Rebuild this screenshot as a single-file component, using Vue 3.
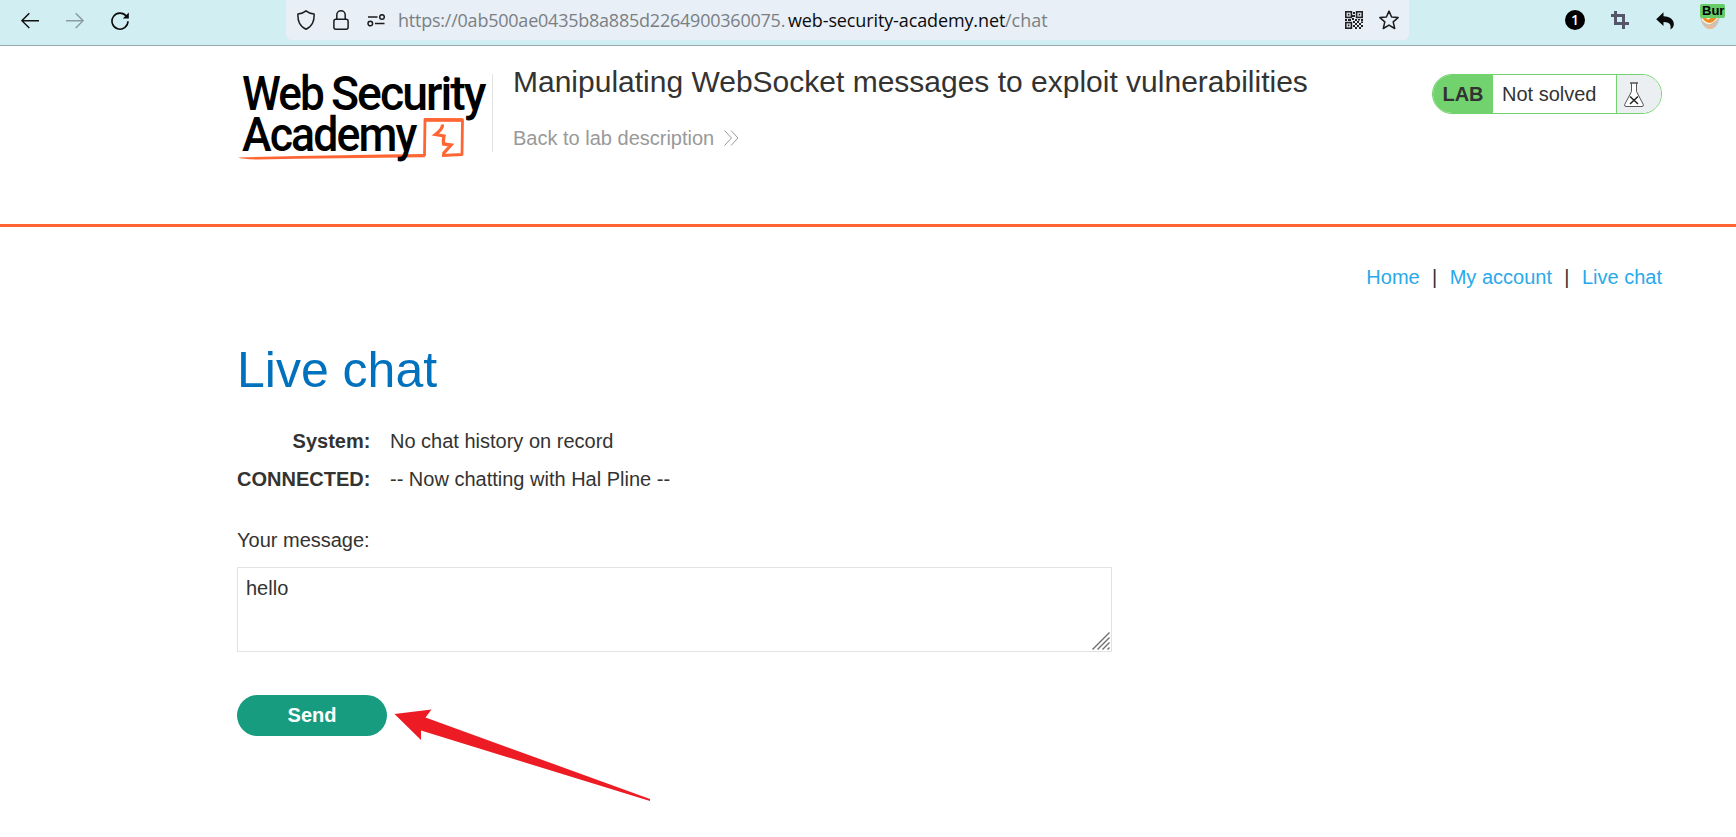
<script setup>
import { ref } from 'vue'

const message = ref('hello')
const links = ['Home', 'My account', 'Live chat']
const rows = [
  { who: 'System:', text: 'No chat history on record' },
  { who: 'CONNECTED:', text: '-- Now chatting with Hal Pline --' },
]
</script>

<template>
  <div class="page">
    <div class="toolbar">
      <div class="nav">
        <svg width="18" height="18" viewBox="0 0 18 18" fill="none" stroke="#111" stroke-width="1.5"><path d="M18 8.7H1M8.3 1.2L.9 8.7l7.4 7.3" /></svg>
        <svg width="18" height="18" viewBox="0 0 18 18" fill="none" stroke="#8b9da1" stroke-width="1.5"><path d="M0 8.7h17M9.7 1.2l7.4 7.5L9.7 16" /></svg>
        <svg width="18" height="18" viewBox="0 0 18 18" fill="none" stroke="#0b0b0b" stroke-width="1.6"><path d="M15.2 4.1A8 8 0 1 0 17 9.3" /><path d="M17.8.4v6h-6z" fill="#0b0b0b" stroke="none" /></svg>
      </div>
      <div class="urlbar">
        <svg class="shield" width="18" height="20" viewBox="0 0 18 20" fill="none" stroke="#1c1c1e" stroke-width="1.5" stroke-linejoin="round"><path d="M9 .9Q12 3.5 17.1 4q.2 5.5-1.5 9Q13.400 17.500 9 19.200 4.600 17.500 2.400 13 .7 9.500.9 4 6 3.500 9 .9z" /></svg>
        <svg class="lock" width="16" height="20" viewBox="0 0 16 20" fill="none" stroke="#1c1c1e" stroke-width="1.5"><rect x=".9" y="9.300" width="14.200" height="9.900" rx="2" /><path d="M3.800 9.300V5a4.200 4.200 0 0 1 8.400 0v4.300" /></svg>
        <svg class="sliders" width="18" height="13" viewBox="0 0 18 13" fill="none" stroke="#1c1c1e" stroke-width="1.500"><circle cx="15" cy="3" r="2.300" /><path d="M1 3h9.500M8 9.500h9.500" /><circle cx="3.300" cy="9.500" r="2.300" /></svg>
        <div class="url"><span class="pre">https://0ab500ae0435b8a885d2264900360075.</span><span class="host">web-security-academy.net</span><span class="path">/chat</span></div>
        <svg class="qr" width="18" height="18" viewBox="0 0 18 18">
          <g fill="none" stroke="#222" stroke-width="1.600"><rect x=".8" y=".8" width="5.600" height="5.600" /><rect x="11.600" y=".8" width="5.600" height="5.600" /><rect x=".8" y="11.600" width="5.600" height="5.600" /></g>
          <path fill="#222" d="M2.800 2.800h1.600v1.600H2.800zM13.600 2.800h1.600v1.600h-1.600zM2.800 13.600h1.600v1.600H2.800zM8 1h2v2H8zM7 4h3v2H7zM0 8h2v2H0zM3 8h3v2H3zM7 7h2v2H7zM10 8h2v2h-2zM13 8h2v1.500h-2zM16 8h2v2h-2zM8 10h2v2H8zM10 12h2v2h-2zM12 10h2v2h-2zM14 12h2v2h-2zM16 10.500h2v1.500h-2zM8 14h2v2H8zM12 14h2v2h-2zM10 16h2v2h-2zM14 16h2v2h-2zM16 14h2v2h-2z" />
        </svg>
        <svg class="star" width="20" height="20" viewBox="0 0 20 20" fill="none" stroke="#1c1c1e" stroke-width="1.500" stroke-linejoin="round"><path d="M10 1.100l2.600 5.900 6.500.6-4.900 4.300 1.500 6.600-5.700-3.400-5.700 3.400 1.500-6.600L.9 7.600l6.500-.6z" /></svg>
      </div>
      <div class="ext">
        <span class="one">1</span>
        <svg class="crop" width="18" height="18" viewBox="0 0 18 18" fill="none" stroke="#56566a" stroke-width="3"><path d="M4.500 0v12.500H18M0 4.500h12.500V18" /></svg>
        <svg class="undo" width="18" height="18" viewBox="0 0 18 18"><path fill="#0a0a0a" d="M7.500.3v4C14.500 4.300 18 8 17.800 12.500c-.1 2-1.300 4-3.500 5 1.200-4.500-.3-7.500-6.800-7.500v4L.2 7.200z" /></svg>
        <div class="bur">
          <svg width="20" height="14" viewBox="0 0 20 14"><path d="M0 0h20Q19 11.500 12 14H8Q1 11.500 0 0z" fill="#c9c4bb" /><path d="M1.500 0h16.500q-1 7-7 9.500Q4 8 1.500 0z" fill="#f08a24" /><path d="M2 4q4 5 8 4.500T18 2M5 1l3 3 5-3" fill="none" stroke="#fff3dd" stroke-width="1.300" /><path d="M4 9.500q6 4 12 0l-4 4.300H8z" fill="#f2b98c" /></svg>
          <span>Bur</span>
        </div>
      </div>
    </div>

    <header class="lab-header">
      <svg class="logo" width="255" height="100" viewBox="0 0 255 100">
        <g fill="none" stroke="#ff6633" stroke-linejoin="round">
          <path d="M187.500 96L188 59.500L225.500 60L225 94.500L205 95.500" stroke-width="2.800" />
          <path d="M188 60h37.500" stroke-width="3.600" />
          <path d="M205.500 64.500q.5 4-7 10l8.500 1.500q-1 4.500-.5 8l7.500 1-8 9" stroke-width="3.300" stroke-linejoin="miter" />
        </g>
        <path d="M1 97.500Q100 95 187.500 94l.5 3.200Q100 98 20 99.500Q5 99 1 97.500z" fill="#ff6633" />
        <g class="logotype">
          <text x="5" y="50" textLength="81" lengthAdjust="spacingAndGlyphs">Web</text>
          <text x="94" y="50" textLength="153.500" lengthAdjust="spacingAndGlyphs">Security</text>
          <text x="5" y="90.700" textLength="173.500" lengthAdjust="spacingAndGlyphs">Academy</text>
        </g>
      </svg>
      <div class="titles">
        <h2>Manipulating WebSocket messages to exploit vulnerabilities</h2>
        <a class="back">Back to lab description
          <svg width="15" height="16" viewBox="0 0 15 16" fill="none" stroke="#999" stroke-width="1"><path d="M.5.500L7.500 8l-7 7.500M7 .5L14 8l-7 7.500" /></svg>
        </a>
      </div>
      <div class="status">
        <b>LAB</b>
        <span class="state">Not solved</span>
        <span class="flask">
          <svg width="20" height="25" viewBox="0 0 20 25" fill="none" stroke="#555" stroke-width="1"><path d="M7.500 1v8.500L.7 22.500q-.5 2 1.300 2h16q1.800 0 1.300-2L12.500 9.500V1" fill="#fff" /><path d="M6 1h8" stroke-width="1.500" /><path d="M6 14.500l8 7.500M14 14.500L6 22" stroke="#222" stroke-width="1.500" /></svg>
        </span>
      </div>
    </header>

    <main>
      <nav class="links">
        <template v-for="(l, i) in links" :key="l"><i v-if="i">|</i><a>{{ l }}</a></template>
      </nav>
      <h1>Live chat</h1>
      <div class="chat">
        <template v-for="r in rows" :key="r.who"><b>{{ r.who }}</b><span>{{ r.text }}</span></template>
      </div>
      <label>Your message:</label>
      <div class="field">
        <textarea v-model="message"></textarea>
        <svg class="grip" width="18" height="18" viewBox="0 0 18 18" fill="none" stroke="#6d6d72" stroke-width="1.400"><path d="M.5 17.500l17-17M5.500 17.500l12-12M10.500 17.500l7-7M15.500 17.500l2-2" /></svg>
      </div>
      <button>Send</button>
    </main>

    <svg class="pointer" width="257" height="94" viewBox="0 0 257 94"><path fill="#ed1c24" d="M.5 6L37.500 1.500 31.500 9.500 256 91v2L27 22.500V32z" /></svg>
  </div>
</template>

<style>
body {
  margin: 0;
  overflow: hidden;
}
</style>

<style scoped>
.page {
  position: relative;
  width: 1736px;
  height: 837px;
  overflow: hidden;
  background: #fff;
  color: #333332;
  font: 20px/20px "Liberation Sans", Arial, sans-serif;
}
svg {
  display: block;
  flex: none;
}
.toolbar {
  box-sizing: border-box;
  display: flex;
  height: 46px;
  background: #d1eef3;
  border-bottom: 1px solid #96a9ad;
}
.nav {
  box-sizing: border-box;
  display: flex;
  flex: none;
  gap: 27px;
  width: 286px;
  padding: 12px 0 0 21px;
}
.urlbar {
  box-sizing: border-box;
  display: flex;
  flex: none;
  align-items: center;
  width: 1123px;
  height: 40px;
  padding: 0 10px 0 11px;
  background: #e8eff6;
  border-radius: 0 0 6px 6px;
}
.lock { margin-left: 18px; }
.sliders { margin-left: 18px; }
.url {
  display: flex;
  flex: 1;
  height: 40px;
  margin-left: 13px;
  color: #7b7f83;
  font: 18px/41px "Open Sans", "Noto Sans", sans-serif;
  white-space: pre;
}
.pre { width: 390px; letter-spacing: -0.23px; }
.host { width: 217px; color: #0b0b0d; letter-spacing: -0.12px; }
.path { letter-spacing: 0; }
.star { margin-left: 16px; }
.ext {
  display: flex;
  align-items: flex-start;
  padding-left: 156px;
}
.one {
  width: 20px;
  height: 20px;
  margin-top: 10px;
  border-radius: 50%;
  background: #000;
  color: #fff;
  font: 600 14px/20px "Open Sans", sans-serif;
  text-align: center;
}
.crop { margin: 11px 0 0 26px; }
.undo { margin: 12px 0 0 27px; }
.bur {
  position: relative;
  width: 25px;
  height: 26px;
  margin: 4px 0 0 26px;
}
.bur span {
  position: absolute;
  left: 0;
  top: 0;
  width: 23px;
  height: 14px;
  padding-left: 2px;
  border-radius: 2px;
  background: #66cc66;
  color: #000;
  font: bold 13px/13px "Liberation Sans", Arial, sans-serif;
}
.bur svg {
  position: absolute;
  left: 0;
  top: 11px;
}
.lab-header {
  box-sizing: border-box;
  display: flex;
  align-items: flex-start;
  height: 181px;
  padding: 14px 74px 0 237px;
  border-bottom: 3px solid #ff6633;
}
.logo {
  overflow: visible;
}
.logotype {
  font: 500 47.5px Roboto, sans-serif;
  letter-spacing: -2px;
  fill: #000;
}
.titles {
  box-sizing: border-box;
  flex: 1;
  height: 78px;
  margin-top: 14px;
  padding-left: 20px;
  border-left: 1px solid #e3e3e3;
}
h2 {
  margin: -7px 0 0;
  font-size: 30px;
  font-weight: 400;
  line-height: 30px;
  white-space: nowrap;
}
.back {
  display: flex;
  align-items: center;
  gap: 10px;
  margin-top: 31px;
  color: #999;
}
.status {
  box-sizing: border-box;
  display: flex;
  width: 230px;
  height: 40px;
  margin-top: 14px;
  border: 1px solid #72d26e;
  border-radius: 20px;
  overflow: hidden;
  line-height: 38px;
}
.status b {
  width: 60px;
  background: #72d26e;
  text-align: center;
}
.state {
  box-sizing: border-box;
  width: 123px;
  padding-left: 9px;
}
.flask {
  flex: 1;
  padding: 7px 0 0 7px;
  background: #ebeff2;
  border-left: 1px solid #72d26e;
}
main {
  display: flex;
  flex-direction: column;
  align-items: flex-start;
  padding: 40px 74px 0 237px;
}
.links {
  display: flex;
  align-self: flex-end;
}
.links a { color: #29a9ea; }
.links i {
  width: 30px;
  font-style: normal;
  text-align: center;
}
h1 {
  margin: 58px 0 0;
  color: #0071bd;
  font-size: 50px;
  font-weight: 400;
  line-height: 50px;
}
.chat {
  display: grid;
  grid-template-columns: 133.400px auto;
  gap: 18px 19.600px;
  margin-top: 36px;
}
.chat b { text-align: right; }
label { margin-top: 41px; }
.field {
  position: relative;
  width: 875px;
  height: 85px;
  margin-top: 17px;
}
textarea {
  box-sizing: border-box;
  display: block;
  width: 875px;
  height: 85px;
  padding: 10px 8px;
  border: 1px solid #e2e2e2;
  outline: 0;
  resize: none;
  overflow: hidden;
  background: #fff;
  color: inherit;
  font: inherit;
}
.grip {
  position: absolute;
  right: 2px;
  bottom: 2px;
}
button {
  width: 150px;
  height: 41px;
  margin-top: 43px;
  padding: 0 0 1px;
  border: 0;
  border-radius: 21px;
  background: #189c80;
  color: #fff;
  font: bold 20px/20px "Liberation Sans", Arial, sans-serif;
}
.pointer {
  position: absolute;
  left: 394px;
  top: 708px;
}
</style>
